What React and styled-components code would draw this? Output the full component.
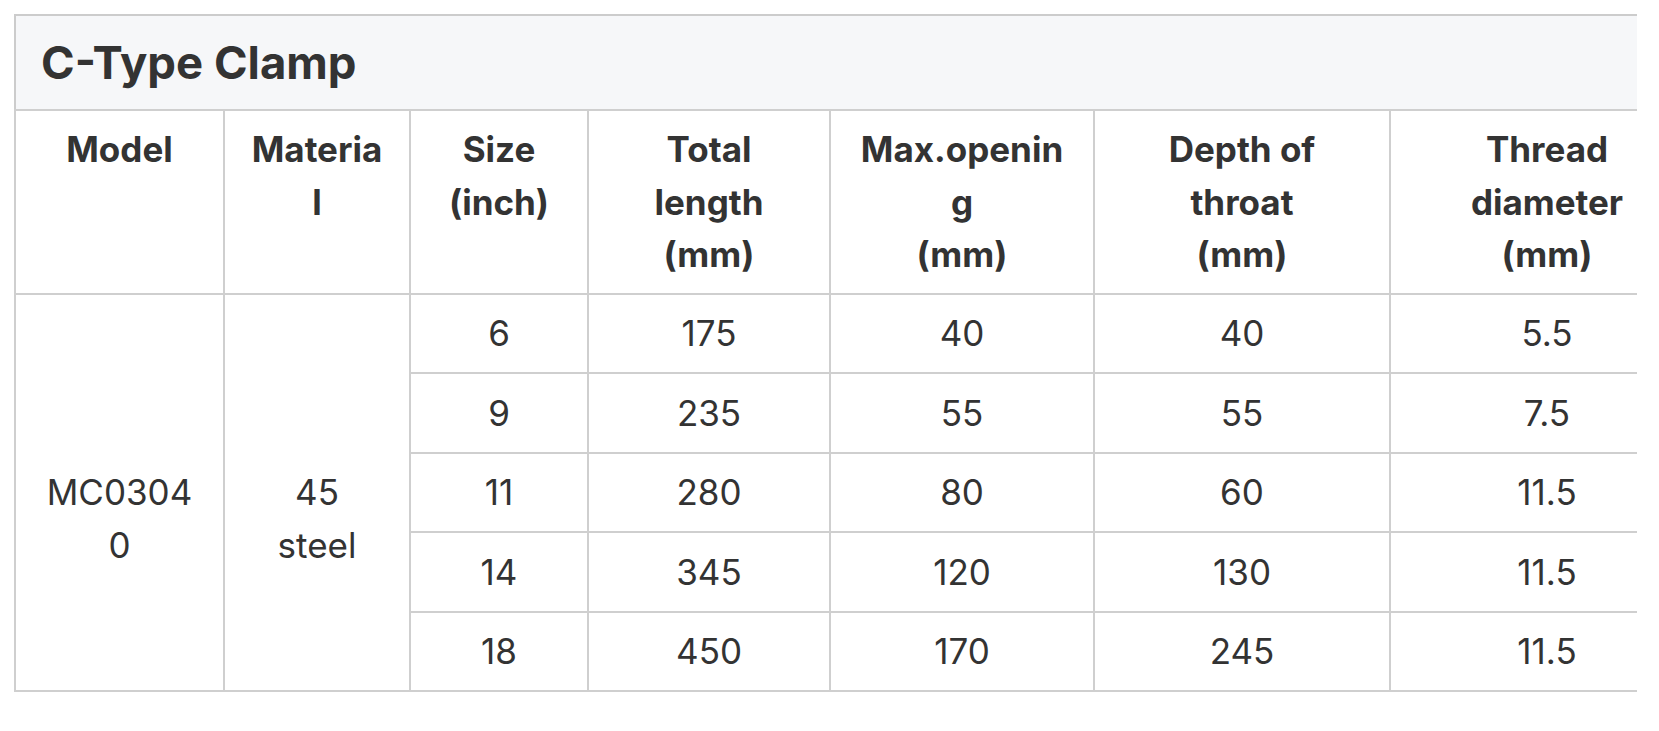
import React from 'react';
import styled, { createGlobalStyle } from 'styled-components';

const GlobalStyle = createGlobalStyle`
  body {
    margin: 0;
    background: #ffffff;
    font-family: Inter, "Noto Sans", sans-serif;
    color: #333333;
  }
`;

const columns = [209, 186, 178, 242, 264, 296, 314];

const headers = [
  ['Model'],
  ['Materia', 'l'],
  ['Size', '(inch)'],
  ['Total', 'length', '(mm)'],
  ['Max.openin', 'g', '(mm)'],
  ['Depth of', 'throat', '(mm)'],
  ['Thread', 'diameter', '(mm)'],
];

const rows = [
  ['6', '175', '40', '40', '5.5'],
  ['9', '235', '55', '55', '7.5'],
  ['11', '280', '80', '60', '11.5'],
  ['14', '345', '120', '130', '11.5'],
  ['18', '450', '170', '245', '11.5'],
];

const Lines = ({ items }) =>
  items.map((t, i) => (
    <React.Fragment key={i}>
      {i > 0 && <br />}
      {t}
    </React.Fragment>
  ));

const App = () => {
  return (
    <>
      <GlobalStyle />
      <Frame>
        <SpecTable>
          <Caption>C-Type Clamp</Caption>
          <colgroup>
            {columns.map((w, i) => (
              <col key={i} style={{ width: w }} />
            ))}
          </colgroup>
          <thead>
            <tr>
              {headers.map((h, i) => (
                <HeadCell key={i}>
                  <Lines items={h} />
                </HeadCell>
              ))}
            </tr>
          </thead>
          <tbody>
            {rows.map((r, i) => (
              <tr key={i}>
                {i === 0 && (
                  <>
                    <Cell rowSpan={rows.length} $shift>
                      <Lines items={['MC0304', '0']} />
                    </Cell>
                    <Cell rowSpan={rows.length} $shift>
                      <Lines items={['45', 'steel']} />
                    </Cell>
                  </>
                )}
                {r.map((v, j) => (
                  <Cell key={j}>{v}</Cell>
                ))}
              </tr>
            ))}
          </tbody>
        </SpecTable>
      </Frame>
    </>
  );
};

const Frame = styled.div`
  margin: 14px 22px 0 14px;
  overflow: hidden;
`;

const SpecTable = styled.table`
  table-layout: fixed;
  width: 1689px;
  border-collapse: collapse;
  border: 2px solid #cccccc;
  font-size: 35px;
  line-height: 52.5px;
`;

const Caption = styled.caption`
  caption-side: top;
  text-align: left;
  background: #f6f7f9;
  border: 2px solid #cccccc;
  border-bottom: none;
  padding: 14px 25px;
  font-size: 45.5px;
  line-height: 65px;
  font-weight: 700;
  color: #333333;
`;

const HeadCell = styled.th`
  border: 2px solid #cfcfcf;
  padding: 12px 26px;
  font-weight: 700;
  text-align: center;
  vertical-align: top;
  white-space: nowrap;
`;

const Cell = styled.td`
  border: 2px solid #cfcfcf;
  padding: ${(p) => (p.$shift ? '65px 26px 12.5px' : '12.5px 26px')};
  font-weight: 400;
  text-align: center;
  vertical-align: middle;
  white-space: nowrap;
`;

export default App;
